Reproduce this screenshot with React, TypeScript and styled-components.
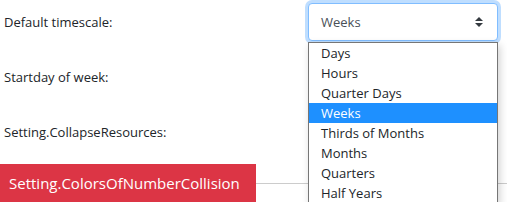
import React from "react";
import styled, { createGlobalStyle } from "styled-components";

const GlobalStyle = createGlobalStyle`
  body {
    margin: 0;
    background: #fff;
    font-family: "Open Sans", "Noto Sans", sans-serif;
    color: #212529;
  }
`;

const timescales = [
  "Days",
  "Hours",
  "Quarter Days",
  "Weeks",
  "Thirds of Months",
  "Months",
  "Quarters",
  "Half Years",
];

// the last two selects sit behind the open list, so their values never show
const rows = [
  { label: "Default timescale:", value: "Weeks", open: true },
  { label: "Startday of week:", value: "", open: false },
  { label: "Setting.CollapseResources:", value: "", open: false },
];

const App: React.FC = () => {
  return (
    <Page>
      <GlobalStyle />
      {rows.map((row, i) => (
        <Row key={i}>
          <Label>{row.label}</Label>
          <SelectWrap>
            <Select $focused={row.open}>
              <span>{row.value}</span>
              <Arrow viewBox="0 0 4 5">
                <path d="M2 0L0 2h4zm0 5L0 3h4z" fill="#343a40" />
              </Arrow>
            </Select>
            {row.open && (
              <Options>
                {timescales.map((t) => (
                  <Option key={t} $selected={t === row.value}>
                    {t}
                  </Option>
                ))}
              </Options>
            )}
          </SelectWrap>
        </Row>
      ))}

      <TabBar>
        <Tab>Setting.ColorsOfNumberCollision</Tab>
        <Divider />
      </TabBar>
    </Page>
  );
};

export default App;

const Page = styled.div`
  width: 507px;
  padding-top: 3px;
`;

const Row = styled.div`
  display: grid;
  grid-template-columns: 308px 190px;
  align-items: center;
  height: 38px;
  margin-bottom: 17px;
`;

const Label = styled.div`
  font-size: 13px;
  padding-left: 4px;
`;

const SelectWrap = styled.div`
  position: relative;
`;

const Select = styled.div<{ $focused: boolean }>`
  height: 38px;
  box-sizing: border-box;
  display: flex;
  align-items: center;
  justify-content: space-between;
  padding: 0 12px;
  font-size: 13px;
  color: #495057;
  background: #fff;
  border: 1px solid ${(p) => (p.$focused ? "#80bdff" : "#ced4da")};
  border-radius: 4px;
  box-shadow: ${(p) =>
    p.$focused ? "0 0 0 3px rgba(0, 123, 255, 0.25)" : "none"};
`;

const Arrow = styled.svg`
  width: 8px;
  height: 10px;
  margin-right: 2px;
`;

const Options = styled.div`
  position: absolute;
  top: 39px;
  left: 0;
  width: 190px;
  box-sizing: border-box;
  background: #fff;
  border: 1px solid #767676;
  box-shadow: 2px 3px 8px rgba(0, 0, 0, 0.18);
  z-index: 5;
`;

const Option = styled.div<{ $selected: boolean }>`
  height: 20px;
  line-height: 20px;
  padding-left: 12px;
  font-size: 13px;
  color: ${(p) => (p.$selected ? "#fff" : "#212529")};
  background: ${(p) => (p.$selected ? "#1e90ff" : "transparent")};
`;

const TabBar = styled.div`
  display: flex;
  align-items: center;
  margin-top: -4px;
`;

const Tab = styled.div`
  background: #dc3545;
  color: #fff;
  font-size: 15px;
  height: 38px;
  line-height: 38px;
  padding: 0 9px;
  width: 256px;
  box-sizing: border-box;
  white-space: nowrap;
`;

const Divider = styled.div`
  flex: 1;
  border-top: 1px solid #ccc;
`;
